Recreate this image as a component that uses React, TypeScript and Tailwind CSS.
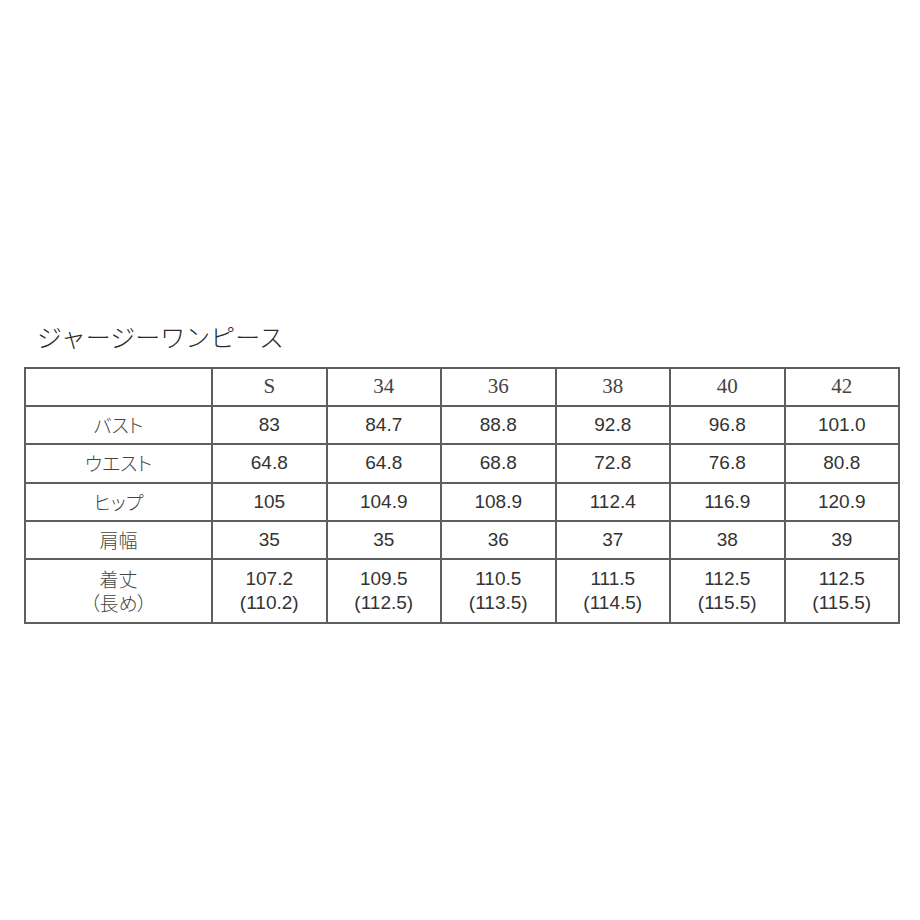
const sizes = ["S", "34", "36", "38", "40", "42"];

const rows: { label: string; values: string[]; h: string }[] = [
  { label: "バスト", values: ["83", "84.7", "88.8", "92.8", "96.8", "101.0"], h: "h-[38px]" },
  { label: "ウエスト", values: ["64.8", "64.8", "68.8", "72.8", "76.8", "80.8"], h: "h-[39px]" },
  { label: "ヒップ", values: ["105", "104.9", "108.9", "112.4", "116.9", "120.9"], h: "h-[38px]" },
  { label: "肩幅", values: ["35", "35", "36", "37", "38", "39"], h: "h-[38px]" },
];

const lengths = [
  ["107.2", "(110.2)"],
  ["109.5", "(112.5)"],
  ["110.5", "(113.5)"],
  ["111.5", "(114.5)"],
  ["112.5", "(115.5)"],
  ["112.5", "(115.5)"],
];

const jp = "font-['Noto_Sans_CJK_JP',sans-serif] font-light";
const num = "font-['Liberation_Sans',Arial,sans-serif]";
const cell = "border-2 border-[#5e5e5e] text-center align-middle p-0";

export default function App() {
  return (
    <div className="w-[920px] h-[920px] bg-white pt-[320px] pl-[24px] text-[#333]">
      <h1 className={`${jp} text-[25px] leading-[32px] pl-[13px] mb-[15px] text-[#2a2a2a]`}>
        ジャージーワンピース
      </h1>

      <table className="w-[876px] table-fixed border-collapse">
        <colgroup>
          <col className="w-[187px]" />
          {sizes.map((s) => (
            <col key={s} />
          ))}
        </colgroup>
        <thead>
          <tr className="h-[38px]">
            <th className={cell}></th>
            {sizes.map((s) => (
              <th
                key={s}
                className={`${cell} font-['Liberation_Serif','Times_New_Roman',serif] font-normal text-[21px] text-[#444]`}
              >
                {s}
              </th>
            ))}
          </tr>
        </thead>
        <tbody>
          {rows.map((row) => (
            <tr key={row.label} className={row.h}>
              <td className={`${cell} ${jp} text-[19px] [font-feature-settings:'palt'] text-[#444]`}>
                {row.label}
              </td>
              {row.values.map((v, j) => (
                <td key={j} className={`${cell} ${num} text-[19px]`}>
                  {v}
                </td>
              ))}
            </tr>
          ))}
          <tr className="h-[64px]">
            <td className={`${cell} ${jp} text-[19px] leading-[24px] [font-feature-settings:'palt'] text-[#444]`}>
              <div>着丈</div>
              <div>（長め）</div>
            </td>
            {lengths.map(([a, b], j) => (
              <td key={j} className={`${cell} ${num} text-[19px] leading-[24px]`}>
                <div>{a}</div>
                <div>{b}</div>
              </td>
            ))}
          </tr>
        </tbody>
      </table>
    </div>
  );
}
